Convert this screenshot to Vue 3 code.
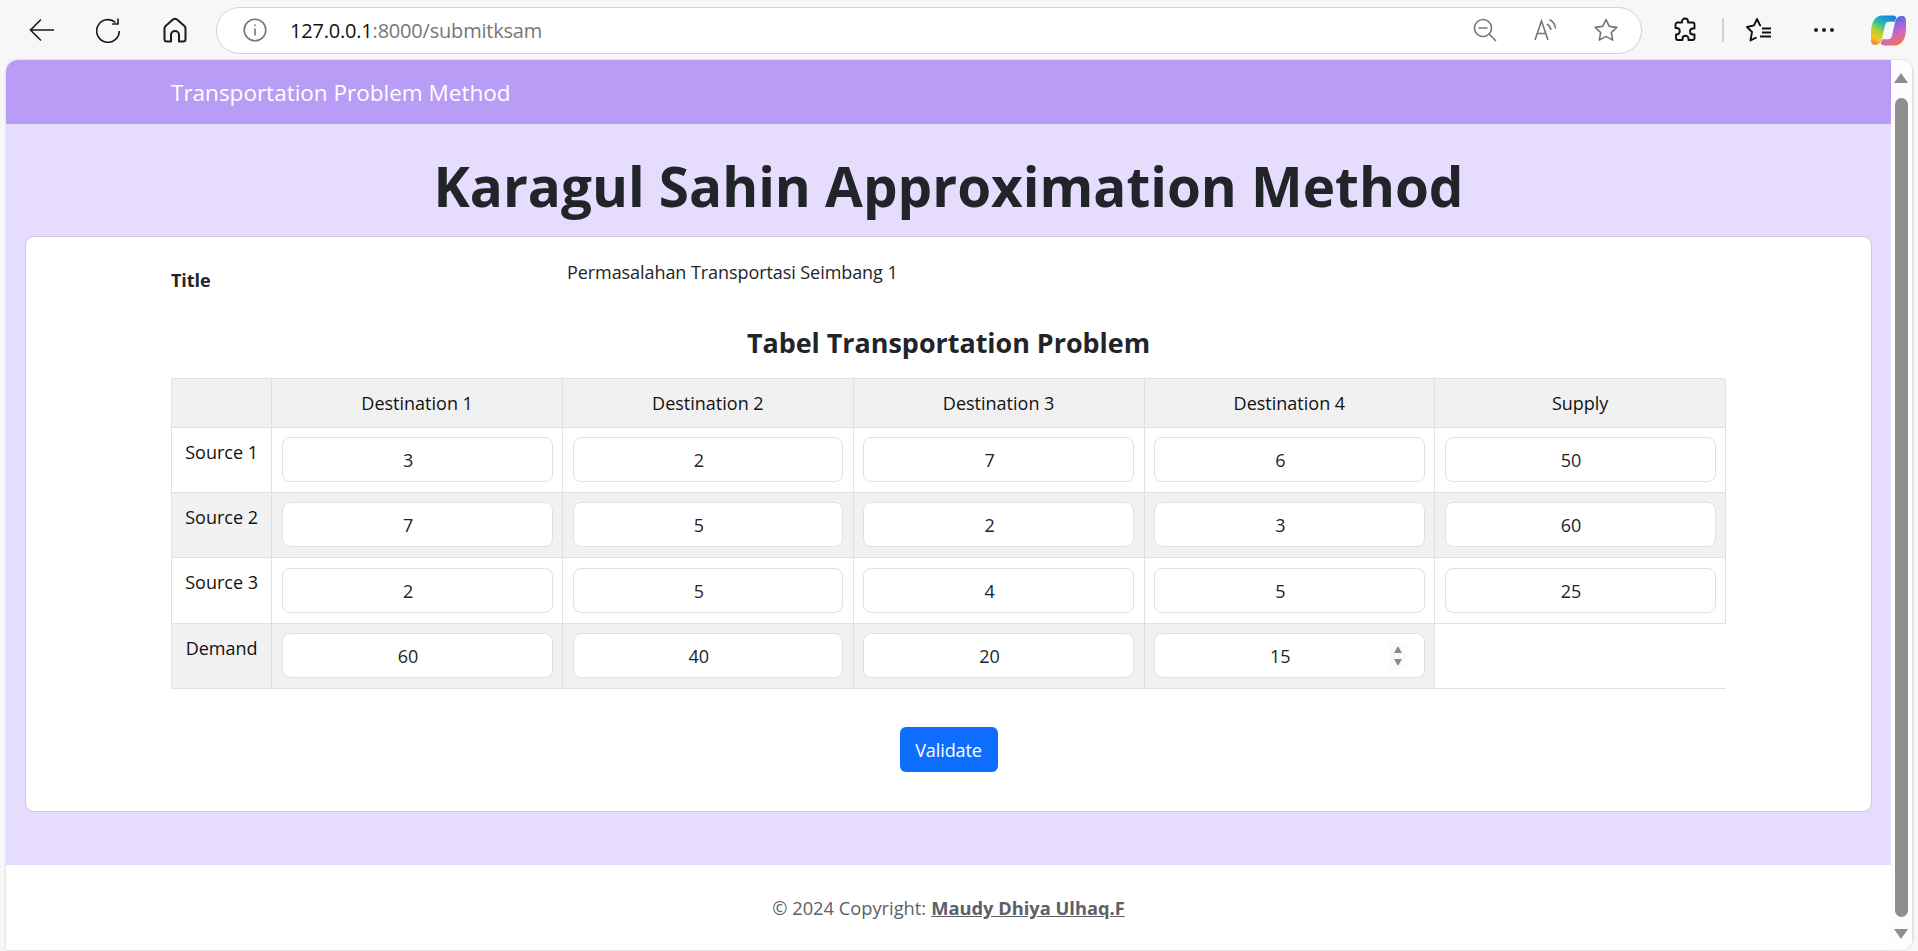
<template>
  <div class="screen">
    <header class="toolbar">
      <div class="nav-icons">
        <svg width="26" height="24" viewBox="0 0 26 24" class="ico"><path d="M25 12H2M12 1.500 1.500 12 12 22.500" /></svg>
        <svg width="26" height="26" viewBox="1 0 26 26" class="ico"><path d="M20.500 5.500A11.300 11.300 0 1 0 24.300 14M23 1.500v5.500h-5.800" /></svg>
        <svg width="24" height="26" viewBox="0 0 24 26" class="ico home"><path d="M1.500 11.500q0-1.700 1.300-2.800L10 2.500q2-1.500 4 0l7.200 6.200q1.300 1.100 1.300 2.800V22q0 2.500-2.500 2.500h-4V18a4 4 0 0 0-8 0v6.500H4q-2.500 0-2.500-2.500z" stroke-linejoin="round" /></svg>
      </div>
      <div class="address">
        <svg width="24" height="24" viewBox="0 0 24 24" class="ico grey"><circle cx="12" cy="12" r="10.800" /><path d="M12 10.500v7M12 6.500v1.600" /></svg>
        <span class="url"><b>127.0.0.1</b>:8000/submitksam</span>
        <div class="address-tools">
          <svg width="24" height="24" viewBox="0 0 24 24" class="ico grey"><circle cx="10" cy="10" r="8.500" /><path d="M5.500 10h9M16 16l7 7" /></svg>
          <svg width="24" height="24" viewBox="0 0 24 24" class="ico grey"><path d="M2 22 8.500 3l6.500 19M4.500 15.500h8M14 6c2.500 1.500 3.500 3.500 4 6M16.500 1.500c3.500 1.800 5.500 5 6 9" /></svg>
          <svg width="26" height="24" viewBox="0 0 26 24" class="ico grey"><path d="m13 1.500 3.300 6.900 7.500 1-5.500 5.200 1.400 7.500L13 18.400l-6.700 3.700 1.400-7.500-5.500-5.200 7.500-1z" stroke-linejoin="round" /></svg>
        </div>
      </div>
      <div class="browser-tools">
        <svg width="24" height="26" viewBox="0 0 24 26" class="ico heavy"><path d="M9 5.500V4.500a3 3 0 0 1 6 0v1h4.500a2 2 0 0 1 2 2v4h-1.500a3 3 0 0 0 0 6h1.500v3.500a2 2 0 0 1-2 2h-4v-1.200a3 3 0 0 0-6 0V23H5a2 2 0 0 1-2-2v-3.500h1a3.300 3.300 0 0 0 0-6.500H2.500V7.500a2 2 0 0 1 2-2z" stroke-linejoin="round" /></svg>
        <span class="divider"></span>
        <svg width="26" height="26" viewBox="0 0 26 26" class="ico heavy"><path d="M15 8.500 14 8.300 11 2 8 8.300 1 10l5 5-1.500 8.500 6-3.200M16 11.500h9M16 15.500h9M14 19.500h11" stroke-linejoin="round" /></svg>
        <span class="dots"><i></i><i></i><i></i></span>
        <svg width="35" height="33" viewBox="0 0 34 31" class="copilot">
          <defs>
            <linearGradient id="cpLeft" x1="0.750" y1="0" x2="0.250" y2="1">
              <stop offset="0" stop-color="#1b82e4" />
              <stop offset="0.350" stop-color="#27b9b0" />
              <stop offset="0.600" stop-color="#a8d236" />
              <stop offset="0.850" stop-color="#f8c51e" />
              <stop offset="1" stop-color="#f58a2e" />
            </linearGradient>
            <linearGradient id="cpRight" x1="0.300" y1="0" x2="0.700" y2="1">
              <stop offset="0" stop-color="#1f6fe0" />
              <stop offset="0.350" stop-color="#8f66de" />
              <stop offset="0.650" stop-color="#d068c0" />
              <stop offset="1" stop-color="#f4713a" />
            </linearGradient>
          </defs>
          <path d="M11 1h10c2 0 3 .5 3.500 2L23 7h-6c-2 0-3 1.500-3.500 4L10.500 24C9.500 28 7 29.500 4 29.500c-3 0-4-2-4-5V17C0 8 4 1 11 1z" fill="url(#cpLeft)" />
          <path d="M23 30H13c-2 0-3-.5-3.500-2l1.500-4h6c2 0 3-1.500 3.500-4L23.500 7C24.500 3 27 1.500 30 1.500c3 0 4 2 4 5V14c0 9-4 16-11 16z" fill="url(#cpRight)" />
        </svg>
      </div>
    </header>

    <div class="browser-window">
      <div class="page">
        <nav class="navbar">Transportation Problem Method</nav>
        <main class="content">
          <h1 class="page-title">Karagul Sahin Approximation Method</h1>
          <section class="card">
            <div class="title-row">
              <strong>Title</strong>
              <span>Permasalahan Transportasi Seimbang 1</span>
            </div>
            <h2 class="table-title">Tabel Transportation Problem</h2>
            <table class="problem-table">
              <colgroup>
                <col class="col-label" />
                <col v-for="head in headers" :key="head" />
              </colgroup>
              <thead>
                <tr>
                  <th></th>
                  <th v-for="head in headers" :key="head">{{ head }}</th>
                </tr>
              </thead>
              <tbody>
                <tr v-for="row in rows" :key="row.name" :class="{ shaded: row.shaded }">
                  <td class="row-name">{{ row.name }}</td>
                  <td v-for="(val, i) in row.values" :key="i" class="value-cell">
                    <input type="number" class="cell-input" :value="val" />
                    <!-- the pointer rests on this field in the screenshot -->
                    <span v-if="row.name === 'Demand' && i === 3" class="spinner">
                      <i class="up"></i>
                      <i class="down"></i>
                    </span>
                  </td>
                  <td v-if="row.name === 'Demand'" class="blank"></td>
                </tr>
              </tbody>
            </table>
            <div class="actions">
              <button class="validate-btn">Validate</button>
            </div>
          </section>
        </main>
        <footer class="footer">
          © 2024 Copyright: <a href="#">Maudy Dhiya Ulhaq.F</a>
        </footer>
      </div>
      <div class="scrollbar">
        <span class="arrow up"></span>
        <span class="thumb"></span>
        <span class="arrow down"></span>
      </div>
    </div>
  </div>
</template>

<script setup>
const headers = ['Destination 1', 'Destination 2', 'Destination 3', 'Destination 4', 'Supply']

const rows = [
  { name: 'Source 1', values: [3, 2, 7, 6, 50], shaded: false },
  { name: 'Source 2', values: [7, 5, 2, 3, 60], shaded: true },
  { name: 'Source 3', values: [2, 5, 4, 5, 25], shaded: false },
  { name: 'Demand', values: [60, 40, 20, 15], shaded: true }
]
</script>

<style>
html,
body {
  margin: 0;
  overflow: hidden;
}
</style>

<style scoped>
.screen {
  width: 1918px;
  height: 951px;
  background: #f7f7f7;
  display: flex;
  flex-direction: column;
  font-family: 'Open Sans', 'Noto Sans', sans-serif;
  color: #212529;
  overflow: hidden;
}

.toolbar {
  height: 60px;
  flex: none;
  display: flex;
  align-items: center;
  padding-left: 29px;
  box-sizing: border-box;
}

.ico {
  fill: none;
  stroke: #1a1a1a;
  stroke-width: 1.6;
  flex: none;
}

.ico.home {
  stroke-width: 2;
}

.ico.grey {
  stroke: #767676;
}

.ico.heavy {
  stroke: #111;
  stroke-width: 1.9;
}

.nav-icons {
  display: flex;
  align-items: center;
  gap: 41px;
  width: 187px;
  flex: none;
}

.address {
  width: 1426px;
  height: 47px;
  flex: none;
  box-sizing: border-box;
  background: #fff;
  border: 1.5px solid #d2d2d2;
  border-radius: 24px;
  display: flex;
  align-items: center;
  padding-left: 26px;
}

.url {
  margin-left: 23px;
  font-size: 20px;
  color: #767676;
  letter-spacing: -0.2px;
}

.url b {
  font-weight: 400;
  color: #111;
}

.address-tools {
  margin-left: auto;
  margin-right: 22px;
  display: flex;
  align-items: center;
  gap: 36px;
}

.browser-tools {
  display: flex;
  align-items: center;
  margin-left: 31px;
}

.divider {
  width: 2px;
  height: 24px;
  background: #d0d0d0;
  margin: 0 22px 0 25px;
}

.dots {
  display: flex;
  gap: 4px;
  margin: 0 37px 0 42px;
}

.dots i {
  width: 4px;
  height: 4px;
  border-radius: 50%;
  background: #222;
}

.copilot {
  flex: none;
}

.browser-window {
  flex: 1;
  min-height: 0;
  display: flex;
  margin: 0 5px 1px 6px;
  border-radius: 12px 12px 12px 0;
  overflow: hidden;
  box-shadow: 0 0 2px rgba(0, 0, 0, 0.25);
}

.page {
  flex: 1;
  min-width: 0;
  display: flex;
  flex-direction: column;
  background: #fff;
}

.navbar {
  height: 64px;
  flex: none;
  background: #b99cf6;
  color: #fff;
  font-size: 22.500px;
  line-height: 65px;
  padding-left: 165px;
}

.content {
  flex: 1;
  background: #e6dcfe;
  padding: 0 19px 53px;
  box-sizing: border-box;
  display: flex;
  flex-direction: column;
}

.page-title {
  margin: 0;
  height: 112px;
  line-height: 124px;
  text-align: center;
  font-size: 54.800px;
  font-weight: 700;
  color: #212529;
}

.card {
  flex: 1;
  background: #fff;
  border: 1px solid #cbc9d3;
  border-radius: 9px;
  padding: 0 145px;
  display: flex;
  flex-direction: column;
}

.title-row {
  display: grid;
  grid-template-columns: 396px 1fr;
  height: 84px;
  font-size: 18px;
  padding-top: 23px;
  box-sizing: border-box;
  letter-spacing: -0.07px;
}

.title-row strong {
  padding-top: 8px;
  color: #212529;
}

.table-title {
  margin: 0;
  height: 57px;
  line-height: 44px;
  text-align: center;
  font-size: 26.900px;
  font-weight: 700;
  color: #212529;
}

.problem-table {
  width: 1555px;
  border-collapse: collapse;
  table-layout: fixed;
  font-size: 18px;
  color: #111;
}

.col-label {
  width: 100.250px;
}

.problem-table th,
.problem-table td {
  border: 1px solid #dee2e6;
  text-align: center;
  padding: 9px 9.500px 10px;
  box-sizing: border-box;
}

.problem-table th {
  height: 49px;
  padding: 0;
  font-weight: 400;
  background: #f1f1f2;
}

.problem-table tbody tr:nth-child(3) td {
  height: 66px;
}

.problem-table tr.shaded td {
  background: #f1f1f2;
}

.problem-table td.row-name {
  vertical-align: top;
  padding-top: 12px;
  padding-left: 0;
  padding-right: 0;
}

.problem-table tr.shaded td.blank {
  background: #fff;
  border-right: none;
}

.value-cell {
  position: relative;
}

.cell-input {
  display: block;
  width: 100%;
  height: 45px;
  box-sizing: border-box;
  padding: 7px 15px 6px 12px;
  border: 1px solid #dee2e6;
  border-radius: 8px;
  background: #fff;
  font-family: inherit;
  font-size: 18px;
  color: #212529;
  text-align: center;
  outline: none;
}

.spinner {
  position: absolute;
  right: 27px;
  top: 18px;
  width: 18px;
  height: 28px;
  background: #fafafa;
  display: flex;
  flex-direction: column;
  align-items: center;
  justify-content: center;
  gap: 6px;
}

.spinner i {
  width: 0;
  height: 0;
  border-left: 4.500px solid transparent;
  border-right: 4.500px solid transparent;
}

.spinner .up {
  border-bottom: 7px solid #8a8a8a;
}

.spinner .down {
  border-top: 7px solid #8a8a8a;
}

.actions {
  display: flex;
  justify-content: center;
  padding-top: 38px;
}

.validate-btn {
  width: 98px;
  height: 45px;
  background: #0d6efd;
  color: #fff;
  border: none;
  border-radius: 6px;
  font-family: inherit;
  font-size: 18px;
  letter-spacing: -0.1px;
}

.footer {
  height: 85px;
  flex: none;
  display: flex;
  align-items: center;
  justify-content: center;
  gap: 5px;
  font-size: 18.300px;
  color: #5c6167;
}

.footer a {
  color: #5c6167;
  font-weight: 700;
}

.scrollbar {
  width: 22px;
  flex: none;
  background: #fdfdfd;
  border-right: 1px solid #e2e2e2;
  box-sizing: border-box;
  display: flex;
  flex-direction: column;
  align-items: center;
  padding: 13px 1px 11px 0;
}

.thumb {
  width: 13px;
  flex: 1;
  margin: 15px 0 12px;
  background: #8e8e8e;
  border-radius: 7px;
}

.arrow {
  width: 0;
  height: 0;
  border-left: 7px solid transparent;
  border-right: 7px solid transparent;
}

.arrow.up {
  border-bottom: 10px solid #8e8e8e;
}

.arrow.down {
  border-top: 10px solid #8e8e8e;
}
</style>
